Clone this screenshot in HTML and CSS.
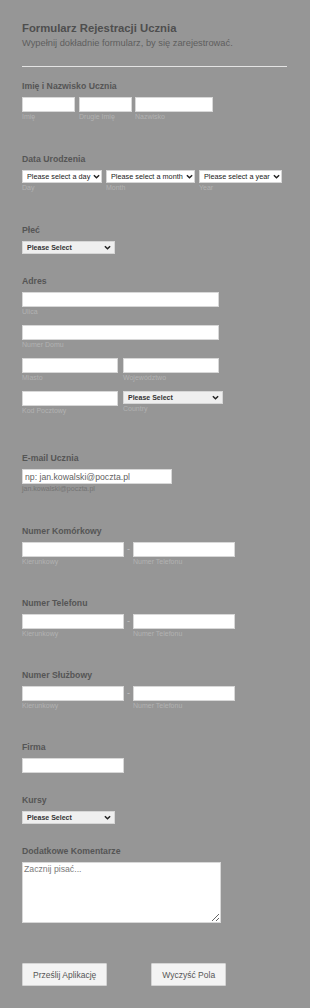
FILE: index.html
```html
<!DOCTYPE html>
<html lang="pl">
<head>
<meta charset="utf-8">
<title>Formularz Rejestracji Ucznia</title>
<link rel="stylesheet" href="styles.css">
</head>
<body>
<form class="form">
  <header class="head">
    <h1 class="title">Formularz Rejestracji Ucznia</h1>
    <p class="subtitle">Wypełnij dokładnie formularz, by się zarejestrować.</p>
  </header>
  <hr class="divider">

  <section class="field f-name">
    <label class="label">Imię i Nazwisko Ucznia</label>
    <div class="row">
      <div class="col"><input class="input w-first" type="text"><span class="sublabel">Imię</span></div>
      <div class="col gap4"><input class="input w-first" type="text"><span class="sublabel">Drugie Imię</span></div>
      <div class="col gap3"><input class="input w-last" type="text"><span class="sublabel">Nazwisko</span></div>
    </div>
  </section>

  <section class="field f-date">
    <label class="label">Data Urodzenia</label>
    <div class="row">
      <div class="col">
        <span class="selwrap w-day"><select class="select"><option>Please select a day</option></select><svg class="chev" viewBox="0 0 8 5"><polyline points="1,1 4,4 7,1"/></svg></span>
        <span class="sublabel">Day</span>
      </div>
      <div class="col gap4">
        <span class="selwrap w-month"><select class="select"><option>Please select a month</option></select><svg class="chev" viewBox="0 0 8 5"><polyline points="1,1 4,4 7,1"/></svg></span>
        <span class="sublabel">Month</span>
      </div>
      <div class="col gap4">
        <span class="selwrap w-year"><select class="select"><option>Please select a year</option></select><svg class="chev" viewBox="0 0 8 5"><polyline points="1,1 4,4 7,1"/></svg></span>
        <span class="sublabel">Year</span>
      </div>
    </div>
  </section>

  <section class="field f-gender">
    <label class="label">Płeć</label>
    <span class="selwrap w-plain grey"><select class="select strong"><option>Please Select</option></select><svg class="chev" viewBox="0 0 8 5"><polyline points="1,1 4,4 7,1"/></svg></span>
  </section>

  <section class="field f-address">
    <label class="label">Adres</label>
    <div class="col"><input class="input w-street" type="text"><span class="sublabel">Ulica</span></div>
    <div class="col arow"><input class="input w-street" type="text"><span class="sublabel">Numer Domu</span></div>
    <div class="row arow">
      <div class="col"><input class="input w-half" type="text"><span class="sublabel">Miasto</span></div>
      <div class="col gap5"><input class="input w-half" type="text"><span class="sublabel">Województwo</span></div>
    </div>
    <div class="row arow">
      <div class="col"><input class="input w-half" type="text"><span class="sublabel">Kod Pocztowy</span></div>
      <div class="col gap5">
        <span class="selwrap w-country grey"><select class="select strong"><option>Please Select</option></select><svg class="chev" viewBox="0 0 8 5"><polyline points="1,1 4,4 7,1"/></svg></span>
        <span class="sublabel">Country</span>
      </div>
    </div>
  </section>

  <section class="field f-email">
    <label class="label">E-mail Ucznia</label>
    <input class="input w-email email" type="email" placeholder="np: jan.kowalski@poczta.pl">
    <span class="sublabel dark">jan.kowalski@poczta.pl</span>
  </section>

  <section class="field f-mobile">
    <label class="label">Numer Komórkowy</label>
    <div class="row">
      <div class="col"><input class="input w-phone" type="tel"><span class="sublabel">Kierunkowy</span></div>
      <span class="dash">-</span>
      <div class="col"><input class="input w-phone" type="tel"><span class="sublabel">Numer Telefonu</span></div>
    </div>
  </section>

  <section class="field f-phone">
    <label class="label">Numer Telefonu</label>
    <div class="row">
      <div class="col"><input class="input w-phone" type="tel"><span class="sublabel">Kierunkowy</span></div>
      <span class="dash">-</span>
      <div class="col"><input class="input w-phone" type="tel"><span class="sublabel">Numer Telefonu</span></div>
    </div>
  </section>

  <section class="field f-work">
    <label class="label">Numer Służbowy</label>
    <div class="row">
      <div class="col"><input class="input w-phone" type="tel"><span class="sublabel">Kierunkowy</span></div>
      <span class="dash">-</span>
      <div class="col"><input class="input w-phone" type="tel"><span class="sublabel">Numer Telefonu</span></div>
    </div>
  </section>

  <section class="field f-company">
    <label class="label">Firma</label>
    <input class="input w-phone" type="text">
  </section>

  <section class="field f-courses">
    <label class="label">Kursy</label>
    <span class="selwrap w-plain grey"><select class="select strong"><option>Please Select</option></select><svg class="chev" viewBox="0 0 8 5"><polyline points="1,1 4,4 7,1"/></svg></span>
  </section>

  <section class="field f-comments">
    <label class="label">Dodatkowe Komentarze</label>
    <textarea class="textarea" placeholder="Zacznij pisać..."></textarea>
  </section>

  <div class="buttons">
    <button class="btn" type="submit">Prześlij Aplikację</button>
    <button class="btn" type="reset">Wyczyść Pola</button>
  </div>
</form>
</body>
</html>
```

FILE: styles.css
```css
html, body {
  margin: 0;
  padding: 0;
  background: #969696;
}

body {
  font-family: "Liberation Sans", Arial, sans-serif;
}

.form {
  display: flex;
  flex-direction: column;
  align-items: flex-start;
  padding: 22px 23px 0 22px;
}

.head {
  display: flex;
  flex-direction: column;
}

.title {
  margin: 0;
  font-size: 11.3px;
  line-height: 13px;
  font-weight: bold;
  color: #4e4e4e;
}

.subtitle {
  margin: 3px 0 0;
  font-size: 9.3px;
  line-height: 11px;
  color: #5e5e5e;
}

.divider {
  align-self: stretch;
  width: 265px;
  height: 1px;
  margin: 17px 0 0;
  border: 0;
  background: #e4e4e4;
}

.field {
  display: flex;
  flex-direction: column;
  align-items: flex-start;
}

.label {
  font-size: 8.7px;
  line-height: 10px;
  font-weight: bold;
  color: #555;
  margin-bottom: 6px;
}

.f-name { margin-top: 14px; }
.f-date { margin-top: 33px; }
.f-gender { margin-top: 33px; }
.f-address { margin-top: 22px; }
.f-email { margin-top: 38px; }
.f-mobile { margin-top: 33px; }
.f-phone { margin-top: 32px; }
.f-work { margin-top: 32px; }
.f-company { margin-top: 32px; }
.f-courses { margin-top: 22px; }
.f-comments { margin-top: 22px; }

.row {
  display: flex;
  align-items: flex-start;
}

.col {
  display: flex;
  flex-direction: column;
  align-items: flex-start;
}

.gap3 { margin-left: 3px; }
.gap4 { margin-left: 4px; }
.gap5 { margin-left: 5px; }

.arow { margin-top: 9px; }

.input {
  box-sizing: border-box;
  height: 15px;
  margin: 0;
  padding: 0 2px;
  border: 1px solid #d8d8d8;
  border-radius: 0;
  background: #fff;
  font-family: "Liberation Sans", Arial, sans-serif;
  font-size: 8.7px;
  color: #555;
  outline: none;
}

.w-first { width: 53px; }
.w-last { width: 78px; }
.w-street { width: 197px; }
.w-half { width: 96px; }
.w-email { width: 150px; }
.w-phone { width: 102px; }

.email::placeholder {
  color: #5f5f5f;
  opacity: 1;
}

.sublabel {
  margin-top: 1px;
  font-size: 7px;
  line-height: 8px;
  color: #b2b2b2;
  white-space: nowrap;
}

.sublabel.dark {
  color: #747474;
}

.dash {
  width: 9px;
  text-align: center;
  font-size: 9px;
  line-height: 15px;
  color: #c4c4c4;
}

.selwrap {
  position: relative;
  display: block;
  box-sizing: border-box;
  height: 13px;
}

.w-day { width: 80px; }
.w-month { width: 89px; }
.w-year { width: 83px; }
.w-plain { width: 93px; }
.w-country { width: 100px; }

.select {
  -webkit-appearance: none;
  appearance: none;
  box-sizing: border-box;
  display: block;
  width: 100%;
  height: 13px;
  margin: 0;
  padding: 0 0 0 4px;
  border: 1px solid #d6d6d6;
  border-radius: 0;
  background: #fff;
  font-family: "Liberation Sans", Arial, sans-serif;
  font-size: 7.3px;
  line-height: 11px;
  color: #222;
  outline: none;
}

.grey .select {
  background: #efefef;
}

.select.strong {
  font-weight: bold;
  font-size: 7px;
  color: #333;
}

.chev {
  position: absolute;
  right: 2px;
  top: 4px;
  width: 7px;
  height: 5px;
  fill: none;
  stroke: #222;
  stroke-width: 1.7;
  pointer-events: none;
}

.grey .chev {
  right: 4px;
}

.textarea {
  box-sizing: border-box;
  width: 199px;
  height: 61px;
  margin: 0;
  padding: 1px 1px;
  border: 1px solid #d8d8d8;
  border-radius: 0;
  background: #fff;
  font-family: "Liberation Sans", Arial, sans-serif;
  font-size: 8.7px;
  line-height: 10px;
  color: #555;
  resize: both;
  outline: none;
}

.textarea::placeholder {
  color: #7a7a7a;
  opacity: 1;
}

.buttons {
  display: flex;
  gap: 44px;
  margin-top: 40px;
}

.btn {
  box-sizing: border-box;
  height: 23px;
  margin: 0;
  padding: 0 10px;
  border: 1px solid #d4d4d4;
  border-radius: 1px;
  background: #f3f3f3;
  font-family: "Liberation Sans", Arial, sans-serif;
  font-size: 8.5px;
  color: #555;
}
```
